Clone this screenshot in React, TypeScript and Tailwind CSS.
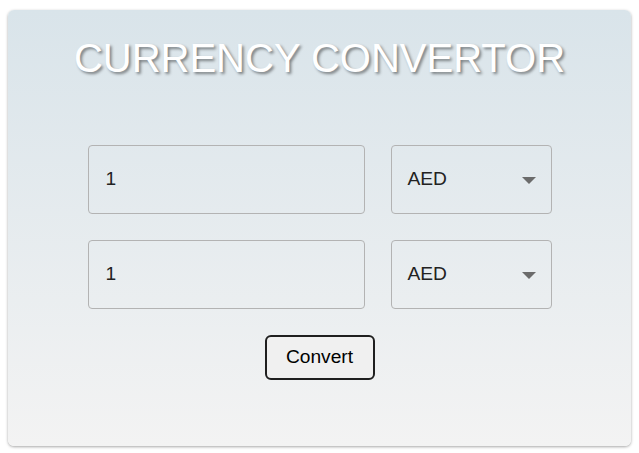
import React from 'react'

const rows = [
  { amount: '1', currency: 'AED' },
  { amount: '1', currency: 'AED' },
]

function CurrencySelect({ value }: { value: string }) {
  return (
    <div className="flex h-[69px] items-center justify-between rounded-[4px] border border-[#b3b3b3] pl-[16px] pr-[15px]">
      <span className="text-[19.2px] text-[#222]">{value}</span>
      <svg width="14" height="7" viewBox="0 0 14 7" className="mt-[1px]">
        <path d="M0 0 L14 0 L7 7 Z" fill="#6b6b6b" />
      </svg>
    </div>
  )
}

export default function App() {
  return (
    <div className="min-h-[453px] bg-white px-2 pt-[10px] font-['Liberation_Sans',Arial,sans-serif]">
      <div className="flex h-[436px] flex-col items-center rounded-md bg-gradient-to-b from-[#d9e4ea] to-[#f3f3f3] pt-[25px] shadow-[0_1px_3px_rgba(0,0,0,0.35)]">
        <h1 className="text-[40px] leading-[46px] text-white [text-shadow:2px_2px_3px_rgba(0,0,0,0.45)]">
          CURRENCY CONVERTOR
        </h1>
        <div className="mt-[64px] grid grid-cols-[277px_161px] gap-x-[26px] gap-y-[26px]">
          {rows.map((row, i) => (
            <React.Fragment key={i}>
              <div className="flex h-[69px] items-center rounded-[4px] border border-[#b3b3b3] pl-[17px]">
                <span className="text-[19.2px] text-[#222]">{row.amount}</span>
              </div>
              <CurrencySelect value={row.currency} />
            </React.Fragment>
          ))}
        </div>
        <button className="mt-[26px] h-[45px] w-[110px] rounded-[6px] border-2 border-[#1f1f1f] bg-[#f0f0f0] text-[19.2px] text-black">
          Convert
        </button>
      </div>
    </div>
  )
}
